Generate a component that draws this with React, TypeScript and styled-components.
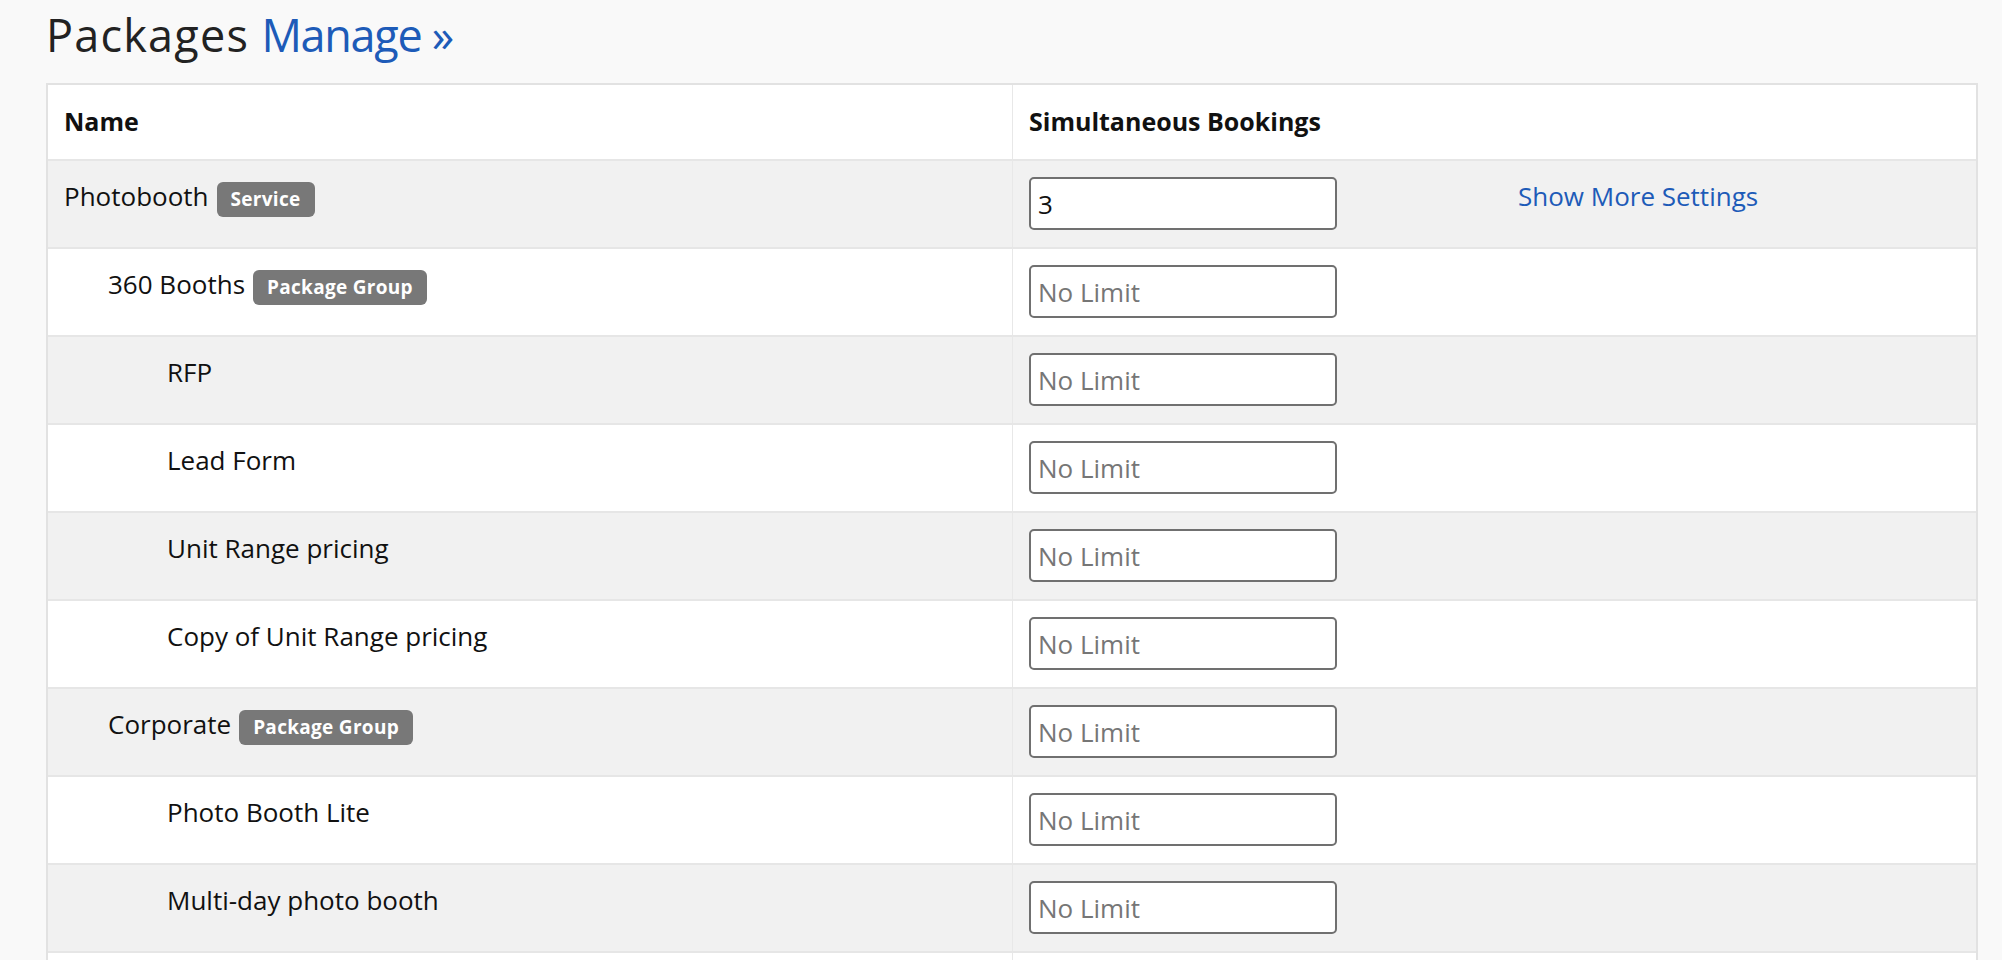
import React from 'react';
import styled, { createGlobalStyle } from 'styled-components';

const GlobalStyle = createGlobalStyle`
  html,
  body {
    margin: 0;
    padding: 0;
    background: #f9f9f9;
  }

  body {
    font-family: 'Open Sans', 'Liberation Sans', Arial, sans-serif;
    color: #111;
  }
`;

const Page = styled.main`
  padding: 0 24px 40px 46px;
`;

const Title = styled.h1`
  margin: 8px 0 21px 0;
  font-size: 45px;
  line-height: 54px;
  font-weight: 400;
  letter-spacing: 1.2px;
  color: #222;
`;

const ManageLink = styled.a`
  margin-left: 2px;
  color: #1d5bb8;
  letter-spacing: -1.3px;
  text-decoration: none;
  cursor: pointer;
`;

const Table = styled.table`
  width: 100%;
  table-layout: fixed;
  border-collapse: separate;
  border-spacing: 0;
  border: 2px solid #e2e2e2;
  background: #fff;
`;

const HeadCell = styled.th<{ $divider?: boolean }>`
  padding: 17px 16px 19px;
  text-align: left;
  font-size: 25px;
  line-height: 38px;
  font-weight: 700;
  color: #111;
  border-left: ${({ $divider }) => ($divider ? '1px solid #e8e8e8' : 'none')};
`;

const Row = styled.tr<{ $striped: boolean }>`
  background: ${({ $striped }) => ($striped ? '#f1f1f1' : '#fff')};
`;

const Cell = styled.td<{ $divider?: boolean }>`
  padding: 16px 16px 17px;
  vertical-align: top;
  border-top: 2px solid #e6e6e6;
  border-left: ${({ $divider }) => ($divider ? '1px solid #e8e8e8' : 'none')};
  font-size: 26px;
  line-height: 38px;
`;

const NameText = styled.div<{ $level: number }>`
  padding-left: ${({ $level }) => [0, 44, 103][$level]}px;
  white-space: nowrap;
`;

const Badge = styled.span`
  display: inline-block;
  margin-left: 8px;
  padding: 8px 14px 9px;
  border-radius: 6px;
  background: #787878;
  color: #fff;
  font-size: 19px;
  line-height: 18px;
  font-weight: 700;
  letter-spacing: 0.3px;
  vertical-align: baseline;
`;

const LimitWrap = styled.div`
  display: flex;
  align-items: flex-start;
`;

const LimitInput = styled.input`
  box-sizing: border-box;
  width: 308px;
  height: 53px;
  padding: 0 7px;
  border: 2px solid #707070;
  border-radius: 5px;
  background: #fff;
  font-family: inherit;
  font-size: 26px;
  color: #111;
  outline: none;

  &::placeholder {
    color: #767676;
  }
`;

const SettingsLink = styled.a`
  margin-left: 181px;
  color: #1d5bb8;
  text-decoration: none;
  cursor: pointer;
  white-space: nowrap;
`;

type PackageRow = {
  name: string;
  level: number;
  badge?: string;
  limit?: string;
  settings?: boolean;
};

const rows: PackageRow[] = [
  { name: 'Photobooth', level: 0, badge: 'Service', limit: '3', settings: true },
  { name: '360 Booths', level: 1, badge: 'Package Group' },
  { name: 'RFP', level: 2 },
  { name: 'Lead Form', level: 2 },
  { name: 'Unit Range pricing', level: 2 },
  { name: 'Copy of Unit Range pricing', level: 2 },
  { name: 'Corporate', level: 1, badge: 'Package Group' },
  { name: 'Photo Booth Lite', level: 2 },
  { name: 'Multi-day photo booth', level: 2 },
  { name: 'Holiday Party', level: 2 },
];

export default function App() {
  return (
    <>
      <GlobalStyle />
      <Page>
        <Title>
          Packages<ManageLink> Manage »</ManageLink>
        </Title>
        <Table>
          <thead>
            <tr>
              <HeadCell>Name</HeadCell>
              <HeadCell $divider>Simultaneous Bookings</HeadCell>
            </tr>
          </thead>
          <tbody>
            {rows.map((row, i) => (
              <Row key={row.name} $striped={i % 2 === 0}>
                <Cell>
                  <NameText $level={row.level}>
                    {row.name}
                    {row.badge && <Badge>{row.badge}</Badge>}
                  </NameText>
                </Cell>
                <Cell $divider>
                  <LimitWrap>
                    <LimitInput defaultValue={row.limit} placeholder="No Limit" />
                    {row.settings && <SettingsLink>Show More Settings</SettingsLink>}
                  </LimitWrap>
                </Cell>
              </Row>
            ))}
          </tbody>
        </Table>
      </Page>
    </>
  );
}
